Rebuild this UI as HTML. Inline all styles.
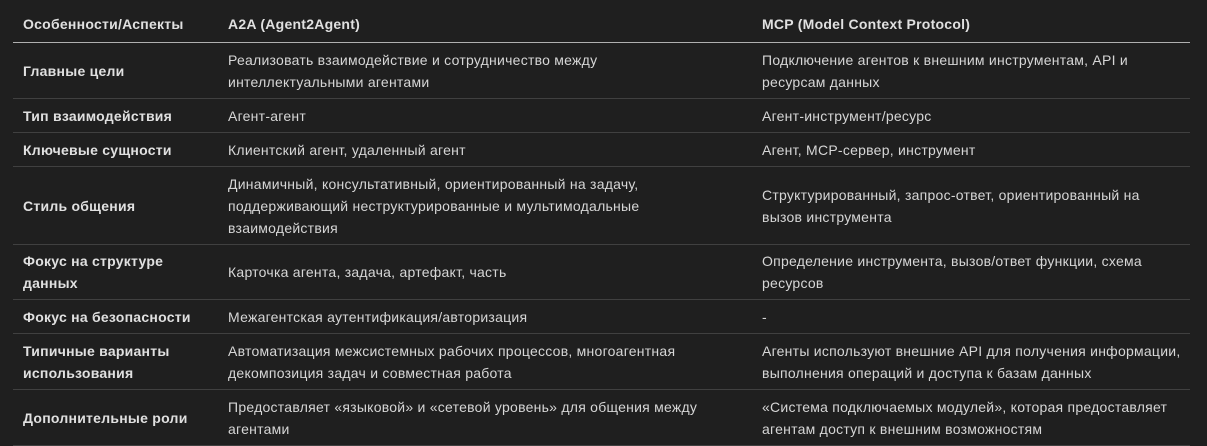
<!DOCTYPE html><html><head><meta charset="utf-8"><style>
body{margin:0;background:#1f1f1f;width:1207px;height:445px;overflow:hidden;font-family:"Liberation Sans",sans-serif;font-size:14px;letter-spacing:0.25px;color:#d6d6d6}
table{position:absolute;left:13px;top:0;width:1177px;border-collapse:collapse;table-layout:fixed}
td,th{padding:6px 10px 5px;line-height:22px;text-align:left;vertical-align:middle;border-bottom:1px solid #404040;white-space:nowrap}
th{font-weight:bold;height:27px;padding-top:10px;padding-bottom:5px;border-bottom:1px solid #b0b0b0;color:#e0e0e0}
td:first-child{font-weight:bold;color:#e0e0e0}
tr.t td{padding-top:5px;padding-bottom:5px}
</style></head><body><table>
<colgroup><col style="width:205px"><col style="width:534px"><col></colgroup>
<tr><th>Особенности/Аспекты</th><th>A2A (Agent2Agent)</th><th>MCP (Model Context Protocol)</th></tr>
<tr><td>Главные цели</td><td>Реализовать взаимодействие и сотрудничество между<br>интеллектуальными агентами</td><td>Подключение агентов к внешним инструментам, API и<br>ресурсам данных</td></tr>
<tr><td>Тип взаимодействия</td><td>Агент-агент</td><td>Агент-инструмент/ресурс</td></tr>
<tr><td>Ключевые сущности</td><td>Клиентский агент, удаленный агент</td><td>Агент, MCP-сервер, инструмент</td></tr>
<tr><td>Стиль общения</td><td>Динамичный, консультативный, ориентированный на задачу,<br>поддерживающий неструктурированные и мультимодальные<br>взаимодействия</td><td>Структурированный, запрос-ответ, ориентированный на<br>вызов инструмента</td></tr>
<tr class="t"><td>Фокус на структуре<br>данных</td><td>Карточка агента, задача, артефакт, часть</td><td>Определение инструмента, вызов/ответ функции, схема<br>ресурсов</td></tr>
<tr><td>Фокус на безопасности</td><td>Межагентская аутентификация/авторизация</td><td>-</td></tr>
<tr><td>Типичные варианты<br>использования</td><td>Автоматизация межсистемных рабочих процессов, многоагентная<br>декомпозиция задач и совместная работа</td><td>Агенты используют внешние API для получения информации,<br>выполнения операций и доступа к базам данных</td></tr>
<tr><td>Дополнительные роли</td><td>Предоставляет «языковой» и «сетевой уровень» для общения между<br>агентами</td><td>«Система подключаемых модулей», которая предоставляет<br>агентам доступ к внешним возможностям</td></tr>
</table></body></html>
